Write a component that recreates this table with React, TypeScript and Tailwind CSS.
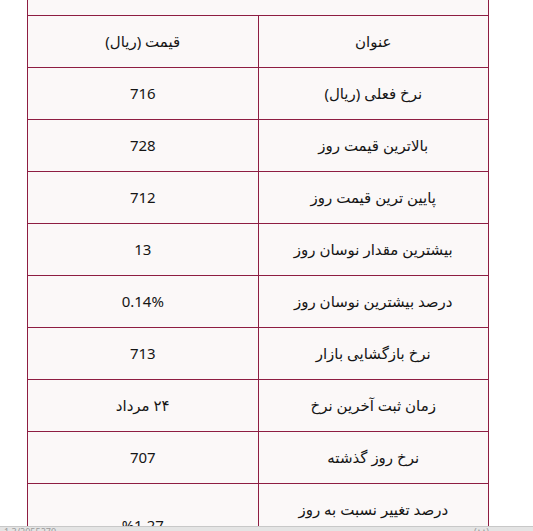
import React from "react";

const rows: { title: React.ReactNode; value: string }[] = [
  { title: "نرخ فعلی (ریال)", value: "716" },
  { title: "بالاترین قیمت روز", value: "728" },
  { title: "پایین ترین قیمت روز", value: "712" },
  { title: "بیشترین مقدار نوسان روز", value: "13" },
  { title: "درصد بیشترین نوسان روز", value: "0.14%" },
  { title: "نرخ بازگشایی بازار", value: "713" },
  { title: "زمان ثبت آخرین نرخ", value: "۲۴ مرداد" },
  { title: "نرخ روز گذشته", value: "707" },
  {
    title: (
      <>
        درصد تغییر نسبت به روز
        <br />
        گذشته
      </>
    ),
    value: "%1,27",
  },
];

const cell = "border border-[#8e1d42] bg-[#fbf8f8] text-center align-middle px-4 py-[13px] leading-[25px]";

export default function App() {
  return (
    <div
      className="relative h-[531px] w-[533px] overflow-hidden bg-white text-[15px] text-[#151515]"
      style={{ fontFamily: '"Noto Sans", "DejaVu Sans", sans-serif' }}
    >
      <div className="pl-[27px]">
        <table dir="rtl" className="w-[462px] table-fixed border-collapse">
          <tbody>
            <tr>
              <td colSpan={2} className="h-[15px] border-x border-b border-[#8e1d42] bg-[#fbf8f8]" />
            </tr>
            <tr>
              <td className={cell}>عنوان</td>
              <td className={cell}>قیمت (ریال)</td>
            </tr>
            {rows.map((r, i) => (
              <tr key={i}>
                <td className={cell}>{r.title}</td>
                <td className={`${cell} ${i === rows.length - 1 ? "pt-[20px]" : ""}`}>{r.value}</td>
              </tr>
            ))}
          </tbody>
        </table>
      </div>

      <div className="absolute bottom-0 left-0 flex h-[5px] w-full items-start overflow-hidden border-t border-[#c8c8c8] bg-[#e4e4e4] px-1 text-[9px] leading-[9px] text-[#9a9a9a]">
        <span>1.3/2055270</span>
        <span className="ml-auto mr-[40px]">(۸۸)</span>
      </div>
    </div>
  );
}
